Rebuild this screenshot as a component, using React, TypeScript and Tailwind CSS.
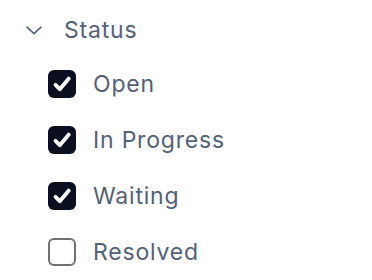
import { useState } from "react";

const items = [
  { label: "Open", checked: true },
  { label: "In Progress", checked: true },
  { label: "Waiting", checked: true },
  { label: "Resolved", checked: false },
];

function Check({ checked }: { checked: boolean }) {
  if (!checked) {
    return <span className="w-[28px] h-[28px] rounded-[6px] border-2 border-[#707070] bg-white shrink-0" />;
  }
  return (
    <span className="w-[28px] h-[28px] rounded-[6px] bg-[#0b1020] shrink-0">
      <svg width="28" height="28" viewBox="0 0 28 28" fill="none">
        <path d="M7.5 14.8l4.3 4.4L20.8 8.6" stroke="white" strokeWidth="3.8" strokeLinecap="round" strokeLinejoin="round" />
      </svg>
    </span>
  );
}

export default function App() {
  const [state, setState] = useState(items);

  return (
    <div className="w-[372px] h-[280px] bg-white pt-[16px] pl-[26px]" style={{ fontFamily: "Inter, 'Noto Sans', sans-serif" }}>
      <div className="flex items-center h-[28px] gap-[22px]">
        <svg width="16" height="9" viewBox="0 0 16 9" fill="none" className="shrink-0">
          <path d="M1 1.2l7 6.5 7-6.5" stroke="#536179" strokeWidth="1.6" strokeLinecap="round" strokeLinejoin="round" />
        </svg>
        <span className="text-[23px] tracking-[0.8px] text-[#536179] leading-none">Status</span>
      </div>
      <div className="mt-[12px] pl-[22px]">
        {state.map((it, i) => (
          <label key={it.label} className="flex items-center h-[56px] gap-[17px] cursor-pointer"
            onClick={() => setState(state.map((s, j) => (j === i ? { ...s, checked: !s.checked } : s)))}>
            <Check checked={it.checked} />
            <span className="text-[23px] tracking-[0.8px] text-[#536179] leading-none">{it.label}</span>
          </label>
        ))}
      </div>
    </div>
  );
}
